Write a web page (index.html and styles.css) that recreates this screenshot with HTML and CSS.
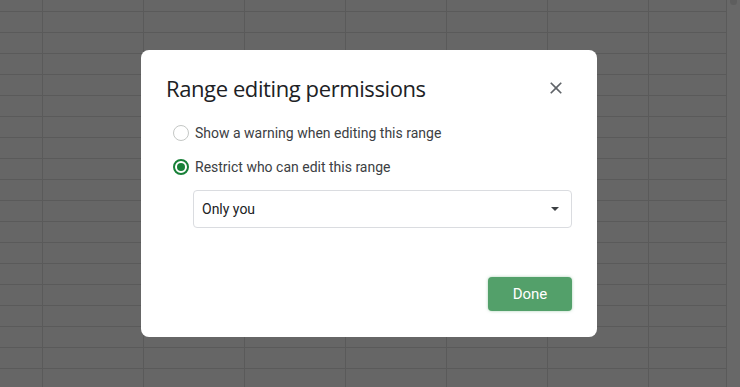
FILE: index.html
```html
<!DOCTYPE html>
<html lang="en">
<head>
<meta charset="utf-8">
<title>Range editing permissions</title>
<link rel="stylesheet" href="styles.css">
</head>
<body>
<div class="sheet">
  <div class="grid"></div>
  <div class="scrollbar"><div class="thumb"></div></div>
</div>
<div class="overlay">
  <div class="dialog" role="dialog" aria-labelledby="dlg-title">
    <div class="dialog-header">
      <h1 class="dialog-title" id="dlg-title">Range editing permissions</h1>
      <button class="close-btn" aria-label="Close">
        <svg width="20" height="20" viewBox="0 0 24 24"><path d="M19 6.41L17.59 5 12 10.59 6.41 5 5 6.41 10.59 12 5 17.59 6.41 19 12 13.41 17.59 19 19 17.59 13.41 12z" fill="#5f6368"/></svg>
      </button>
    </div>
    <div class="options">
      <label class="option">
        <span class="radio"></span>
        <span class="option-label">Show a warning when editing this range</span>
      </label>
      <label class="option">
        <span class="radio checked"></span>
        <span class="option-label">Restrict who can edit this range</span>
      </label>
    </div>
    <div class="select">
      <span class="select-value">Only you</span>
      <span class="select-arrow"></span>
    </div>
    <div class="dialog-footer">
      <button class="done-btn">Done</button>
    </div>
  </div>
</div>
</body>
</html>
```

FILE: styles.css
```css
html, body {
  margin: 0;
  padding: 0;
  height: 100%;
}
body {
  font-family: Roboto, "Liberation Sans", Arial, sans-serif;
  background: #666666;
  overflow: hidden;
}
.sheet {
  display: flex;
  height: 100%;
}
.grid {
  flex: 1;
  background-color: #666666;
  background-image:
    linear-gradient(to right, #5a5a5a 1px, transparent 1px),
    linear-gradient(to bottom, #5a5a5a 1px, transparent 1px);
  background-size: 101px 21px;
  background-position: 42px 11px;
}
.scrollbar {
  width: 13px;
  border-left: 1px solid #5a5a5a;
  background: #686868;
  position: relative;
}
.thumb {
  margin: 0 3px;
  height: 5px;
  border-radius: 0 0 4px 4px;
  background: #5e5e5e;
}
.overlay {
  position: fixed;
  inset: 0;
  display: flex;
  align-items: center;
  justify-content: center;
}
.dialog {
  width: 456px;
  box-sizing: border-box;
  background: #ffffff;
  border-radius: 8px;
  padding: 24px 25px 26px 25px;
  margin-right: 2px;
}
.dialog-header {
  display: flex;
  align-items: center;
  justify-content: space-between;
}
.dialog-title {
  margin: 0;
  font-family: "Open Sans", Roboto, sans-serif;
  font-weight: 400;
  font-size: 22px;
  line-height: 28px;
  color: #202124;
  letter-spacing: -0.4px;
}
.close-btn {
  width: 24px;
  height: 24px;
  padding: 0;
  margin-right: 4px;
  border: none;
  background: none;
  display: flex;
  align-items: center;
  justify-content: center;
}
.options {
  margin-top: 14px;
  padding-left: 7px;
}
.option {
  display: flex;
  align-items: center;
  height: 34px;
  gap: 6px;
}
.radio {
  width: 16px;
  height: 16px;
  box-sizing: border-box;
  border: 1.5px solid #c4c7c5;
  border-radius: 50%;
  display: flex;
  align-items: center;
  justify-content: center;
}
.radio.checked {
  border: 2px solid #188038;
}
.radio.checked::after {
  content: "";
  width: 8px;
  height: 8px;
  border-radius: 50%;
  background: #188038;
}
.option-label {
  font-size: 14px;
  color: #3c4043;
}
.select {
  margin-top: 6px;
  margin-left: 27px;
  height: 38px;
  box-sizing: border-box;
  border: 1px solid #dadce0;
  border-radius: 4px;
  display: flex;
  align-items: center;
  justify-content: space-between;
  padding: 0 12px 0 8px;
}
.select-value {
  font-size: 14px;
  color: #202124;
}
.select-arrow {
  width: 0;
  height: 0;
  border-left: 4px solid transparent;
  border-right: 4px solid transparent;
  border-top: 4px solid #3c4043;
}
.dialog-footer {
  margin-top: 49px;
  display: flex;
  justify-content: flex-end;
}
.done-btn {
  width: 84px;
  height: 34px;
  border: none;
  border-radius: 4px;
  background: #53a06a;
  color: #ffffff;
  font-family: Roboto, sans-serif;
  font-size: 15px;
  box-shadow: 0 0 3px rgba(83, 160, 106, 0.5);
}
```
